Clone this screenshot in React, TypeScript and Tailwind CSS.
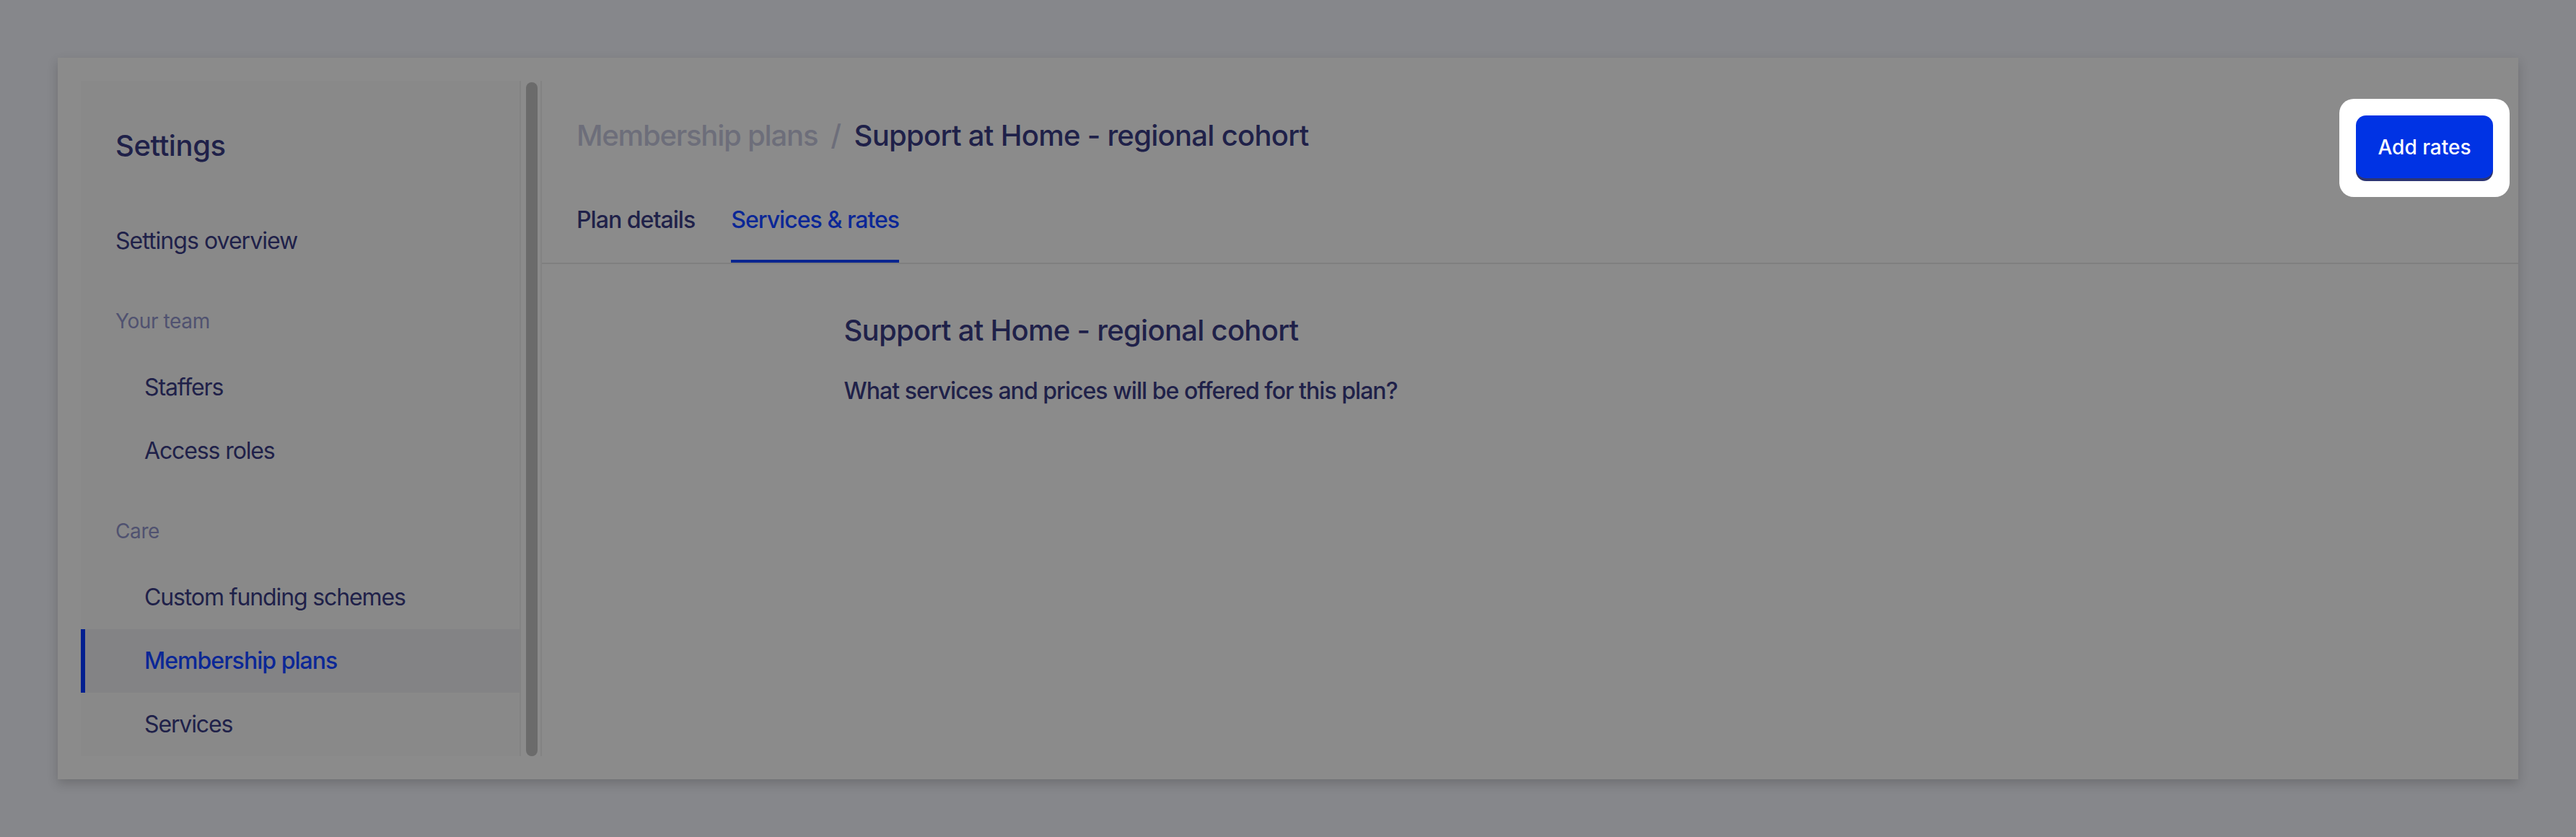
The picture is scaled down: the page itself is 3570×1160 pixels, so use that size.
import React from "react";

interface NavItem {
  label: string;
  active?: boolean;
}

interface NavGroup {
  title: string;
  items: NavItem[];
}

const groups: NavGroup[] = [
  { title: "Your team", items: [{ label: "Staffers" }, { label: "Access roles" }] },
  {
    title: "Care",
    items: [
      { label: "Custom funding schemes" },
      { label: "Membership plans", active: true },
      { label: "Services" },
    ],
  },
];

const Sidebar: React.FC = () => {
  return (
    <div className="flex h-full">
      <nav className="w-[610px] h-full bg-[#898989] border-r-2 border-[#838383] overflow-hidden pt-[62px]">
        <h1 className="pl-[48px] text-[40px] leading-[56px] font-medium text-[#1f2149]">Settings</h1>
        <a className="mt-[60px] h-[88px] flex items-center pl-[48px] text-[32px] leading-[48px] tracking-[-0.03em] text-[#1f2149]">
          Settings overview
        </a>
        {groups.map((group) => (
          <div key={group.title}>
            <div className="mt-[47px] mb-[28px] pl-[48px] text-[28px] leading-[40px] text-[#505270]">
              {group.title}
            </div>
            {group.items.map((item) => (
              <a
                key={item.label}
                className={
                  item.active
                    ? "h-[88px] flex items-center pl-[82px] border-l-[6px] border-[#001f90] bg-[#838385] text-[32px] leading-[48px] tracking-[-0.03em] font-medium text-[#0b2796]"
                    : "h-[88px] flex items-center pl-[88px] text-[32px] leading-[48px] tracking-[-0.035em] text-[#1f2149]"
                }
              >
                {item.label}
              </a>
            ))}
          </div>
        ))}
      </nav>
      <div className="w-[29px] h-full border-r-2 border-[#838383] pl-[7px] pt-[2px]">
        <div className="w-[16px] h-full rounded-full bg-[#6b6b6b]" />
      </div>
    </div>
  );
};

const App: React.FC = () => {
  return (
    <div className="h-[1160px] bg-[#86878b] p-[80px] font-['Inter',sans-serif] tracking-[-0.025em]">
      <div className="h-[1000px] bg-[#8b8b8b] shadow-[0_6px_14px_rgba(0,0,0,0.18)] flex">
        <div className="py-[32px] pl-[32px]">
          <Sidebar />
        </div>

        <main className="flex-1 flex flex-col">
          <header className="border-b-2 border-[#7f7f7f] pl-[48px] pr-[12px] pt-[57px]">
            <div className="flex justify-between items-start">
              <div className="mt-[23px] flex items-center gap-[18px] text-[40px] leading-[56px] font-medium">
                <span className="text-[#6d6e7a] tracking-[-0.03em]">Membership plans</span>
                <span className="text-[#6d6e7a]">/</span>
                <span className="text-[#1f2149] tracking-[-0.018em]">Support at Home - regional cohort</span>
              </div>
              <div className="bg-white rounded-[20px] p-[23px] pb-[26px]">
                <button className="w-[190px] h-[87px] rounded-[14px] bg-[#0033e4] shadow-[0_4px_0_#2d3572] text-white text-[28px] font-medium tracking-normal">
                  Add rates
                </button>
              </div>
            </div>
            <div className="mt-[8px] flex gap-[50px] text-[32px] leading-[48px] font-medium tracking-[-0.03em]">
              <span className="pb-[31px] border-b-4 border-transparent text-[#1f2149]">Plan details</span>
              <span className="pb-[31px] border-b-4 border-[#0a2590] text-[#0b2796]">Services &amp; rates</span>
            </div>
          </header>

          <section className="w-[1902px] mx-auto pt-[64px]">
            <h2 className="text-[40px] leading-[56px] font-medium tracking-[-0.018em] text-[#1f2149]">
              Support at Home - regional cohort
            </h2>
            <p className="mt-[32px] text-[32px] leading-[48px] font-medium tracking-[-0.03em] text-[#1f2149]">
              What services and prices will be offered for this plan?
            </p>
          </section>
        </main>
      </div>
    </div>
  );
};

export default App;
